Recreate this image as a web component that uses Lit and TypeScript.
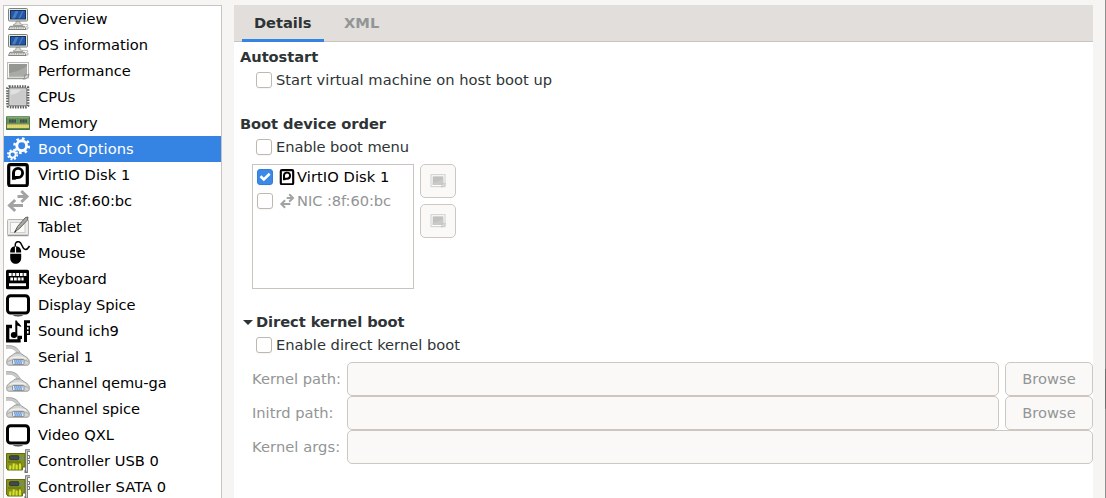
import { LitElement, html, css, svg } from "lit";
import { customElement, property } from "lit/decorators.js";

const monitor = svg`
  <rect x="2.500" y="1.500" width="19" height="12.500" rx="1" fill="#e9e9e3" stroke="#7d7f79"/>
  <rect x="4.500" y="3.500" width="15" height="8.500" fill="#2458a6" stroke="#123263"/>
  <path d="M6 11.500 9.500 4h3l-3.500 7.500zM12.500 11.500 16 4h1.500L14 11.500z" fill="#6d9ad6" opacity=".55"/>
  <path d="M10 14.500h4v2l2.500 1v1h-9v-1l2.500-1z" fill="#d9d9d4" stroke="#8b8b85" stroke-width=".7"/>
  <path d="M4 19.300h14.500l1.500 3.200H2.500z" fill="#f1f1ee" stroke="#74766f" stroke-width=".9"/>
  <path d="M4.500 20.900h13.500" stroke="#777" stroke-dasharray="1.200 .6" stroke-width="1"/>
  <path d="M16 17.500c3-.3 6-.2 6 .6s-2 .7-2 1.900M20.500 20h1.500v2h-2" fill="none" stroke="#a5a7a1" stroke-width=".8"/>`;
const image = svg`
  <rect x="1.500" y="3.500" width="21" height="15.500" fill="#f8f8f8" stroke="#b9bbb7"/>
  <path d="M1 19.700h19" stroke="#8b8d89"/>
  <rect x="3" y="5" width="18" height="12.500" fill="#959793"/>
  <path d="M3 14c7-1 12-3 18-7v10.500H3z" fill="#a9aba7"/>
  <path d="M17.500 20c1.500-1 1.500-2.500 1.300-4 1.500.5 2.700 0 4.200-1 0 2.500-2.500 5-5.500 5z" fill="#e6e7e5" stroke="#777974" stroke-width=".8"/>`;
const thumb = svg`
  <rect x="1.500" y="2.500" width="21" height="18" fill="#fff" stroke="#a5a7a3" stroke-width="1.500"/>
  <rect x="4" y="5" width="16" height="13" fill="#8a8c88"/>
  <path d="M4 15c6-1 10-3 16-6v9H4z" fill="#9b9d99"/>
  <path d="M16.500 21c1.500-1 1.500-3 1.200-4.500 1.800.5 3.500 0 5.300-1 0 3-3 5.500-6.500 5.500z" fill="#ddd" stroke="#777974" stroke-width="1.100"/>`;
const cpu = svg`
  <rect x="1.700" y="1.700" width="20.200" height="20.200" rx="1.500" fill="none" stroke="#5c5f5a" stroke-width="3" stroke-dasharray="1.500 1.060"/>
  <rect x="2.800" y="2.800" width="18" height="18" rx="1.500" fill="#cfcfcf" stroke="#777974"/>
  <rect x="4.500" y="4.500" width="14.600" height="14.600" fill="#e0e0e0"/>
  <path d="M4.500 19.100V10C9 9 13 8 15 4.500h4.100v14.600z" fill="#cbcbcb"/>`;
const memory = svg`
  <path d="M.5 5.700h23v12.800H.5z" fill="#5f9457" stroke="#55784e"/>
  <path d="M1 6.300h22" stroke="#8bb583"/>
  <path d="M2.500 8h8v4.200h-8zM13.500 8h8v4.200h-8z" fill="#444f42" stroke="#7fa877" stroke-width=".6"/>
  <path d="M5 8v4.200M8 8v4.200M16 8v4.200M19 8v4.200" stroke="#71806d" stroke-width=".6"/>
  <path d="M1 15.300h22" stroke="#c5c35a" stroke-width="3.400"/>
  <path d="M1.500 15.300h21" stroke="#f0e27a" stroke-width="3.400" stroke-dasharray="1.200 .8"/>
  <path d="M.5 18.300h23" stroke="#496844"/>`;
const gears = svg`
  <circle cx="15.700" cy="8.700" r="4.900" fill="none" stroke="#fff" stroke-width="2.900"/>
  <circle cx="15.700" cy="8.700" r="7.200" fill="none" stroke="#fff" stroke-width="2.500" stroke-dasharray="2.600 3.055"/>
  <circle cx="6.600" cy="17.600" r="3.100" fill="none" stroke="#fff" stroke-width="1.900"/>
  <circle cx="6.600" cy="17.600" r="4.700" fill="none" stroke="#fff" stroke-width="1.800" stroke-dasharray="1.900 1.791"/>`;
const disk = svg`
  <rect x="2.700" y="1.700" width="18.600" height="21.100" rx="1.800" fill="#fff" stroke="#000" stroke-width="3.200"/>
  <path d="M6 16.800V10a6 6 0 1 1 6 6c-2 0-2.500.8-4 .8z" fill="#000"/>
  <path d="M9 13V9.800a3.100 3.100 0 1 1 3.100 3.200z" fill="#fff"/>`;
const nic = svg`
  <path d="M11.500 7.500h9.500M15.300 2l5.700 5.500-5.700 5.500M17 16.500H3.500M9.200 11l-5.700 5.500L9.200 22" fill="none" stroke="#a3a3a3" stroke-width="3"/>`;
const tablet = svg`
  <rect x="1.500" y="4.500" width="21" height="15.500" rx="1" fill="#ececea" stroke="#b5b5b1"/>
  <rect x="4.500" y="7.500" width="14.500" height="10" fill="#fafaf8" stroke="#cfcfcb"/>
  <path d="M1.500 20.700h21" stroke="#858782"/>
  <path d="M9 16.500 11.500 11.500 19.500 2.500l2.500-.5-.5 3L13.500 13.500z" fill="#a8aaa5" stroke="#555753" stroke-width=".9"/>
  <path d="m8 18 1-2.500 1.500 1.200z" fill="#222"/>`;
const mouse = svg`
  <path d="M4.200 11.500c0-4 1.800-5.800 4.700-6.200v6.200zM10.100 5.300c3.300.4 5.100 2.200 5.100 6.200h-5.100zM4.200 12.800h11v4c0 8-11 8-11 0z" fill="#000"/>
  <path d="M9.500 5.700C8.500 1.500 11 .3 13 .8c3.500.8 2.500 7.400 6.500 7.700 2 .1 2.700-1.500 4-3.500" fill="none" stroke="#000" stroke-width="1.500"/>`;
const keyboard = svg`
  <rect y="2.700" width="23" height="19.500" rx="1.500" fill="#000"/>
  <path d="M2.800 7.500h17.600" stroke="#fff" stroke-width="3" stroke-dasharray="2.800 .9"/>
  <path d="M4.300 12h13.300" stroke="#fff" stroke-width="3" stroke-dasharray="2.800 .9"/>
  <path d="M3 17.700h17" stroke="#fff" stroke-width="2.800"/>`;
const display = svg`
  <rect x="1.500" y="2.700" width="21" height="17.300" rx="3" fill="#fff" stroke="#000" stroke-width="3"/>
  <path d="M6.500 22.200h11c-3 1.600-8 1.600-11 0z" fill="#222"/>`;
const sound = svg`
  <path d="M6 7.500H1.700v14.300H13v-3.500h3" fill="none" stroke="#000" stroke-width="3.300"/>
  <path d="M9.300 17V1.500h1.500c.8 2.600 3.700 3.500 4.700 6.500l-4.200-1.500V17z" fill="#000"/>
  <ellipse cx="8" cy="16" rx="3.200" ry="3" fill="#000"/>
  <path d="M24 2.800h-4.500V23" fill="none" stroke="#000" stroke-width="3"/>
  <path d="M20 7.500h3.300v3.800H20M20 11.300h3.300v3.900H20" fill="none" stroke="#000" stroke-width="1.500"/>`;
const serial = svg`
  <path d="M0 2c6-1 10.500 1 12.500 6" fill="none" stroke="#c9cbc8" stroke-width="2.800"/>
  <path d="M0 .7c7-.6 12 1.800 14 7" fill="none" stroke="#9b9d9a" stroke-width=".8"/>
  <path d="M0 3.400c5-.8 9 .6 11 4.600" fill="none" stroke="#a9aba8" stroke-width=".7"/>
  <path d="M9 8h5.500c3 3 8 4 8.700 8v2.500c0 1-1 1.700-2 1.700H2.800c-1 0-2-.7-2-1.700V16C1.500 12 6 11 9 8z" fill="#d3d5d2" stroke="#8f918e" stroke-width=".9"/>
  <path d="M4 13.500c4-2 12-2 16 0" fill="none" stroke="#f2f2f2" stroke-width="1.300"/>
  <path d="M1.500 17c2-3 19-3 21 0" fill="none" stroke="#a3a5a2" stroke-width=".8"/>
  <rect x="6.500" y="14.500" width="11.500" height="5" rx="1" fill="#e2eaf4" stroke="#858784" stroke-width=".9"/>
  <path d="M8 16h8.500M8.500 18h7.500" stroke="#5b93dd" stroke-width="1.700" stroke-dasharray="1.700 .3"/>`;
const card = svg`
  <path d="M.5 4.500h18.500v13.500h-2.500v3H1.500v-1.500h-1z" fill="#87931a" stroke="#626b16"/>
  <rect x="3.500" y="6.700" width="9.500" height="4" rx="1" fill="#414952" stroke="#272c30" stroke-width=".8"/>
  <path d="M13 7.500h4M13 9.700h4" stroke="#5f8f96" stroke-width="1.200"/>
  <path d="M2 13h13M11 15h5" stroke="#5f6a14" stroke-width="1"/>
  <path d="M4 20.500l.5-4M7.300 20.500l.5-6M10.600 20.500v-5M14 20.500v-6" stroke="#d4e32a" stroke-width="2.100"/>
  <path d="M24 1.700h-3.500V22.500h-2" fill="none" stroke="#6f726d" stroke-width="2.800"/>
  <path d="M24 1.700h-3.500V22.500" fill="none" stroke="#d0d2cd" stroke-width="1.100"/>
  <path d="M21.500 6.500h2v3h-2M21.500 11.500h2v3h-2" fill="none" stroke="#777974"/>`;

const icons: Record<string, unknown> = {
  monitor, image, thumb, cpu, memory, gears, disk, nic, tablet, mouse, keyboard, display, sound, serial, card,
};

@customElement("vm-icon")
class VmIcon extends LitElement {
  @property() name = "monitor";
  static styles = css`
    :host { display: block; width: 24px; height: 24px; flex: none; }
    .glyph { display: block; width: 100%; height: 100%; }
  `;
  render() {
    return html`<svg class="glyph" viewBox="0 0 24 24">${icons[this.name]}</svg>`;
  }
}

@customElement("check-row")
class CheckRow extends LitElement {
  @property() label = "";
  @property() icon = "";
  @property({ type: Boolean }) checked = false;
  static styles = css`
    :host { display: flex; align-items: center; height: 24px; white-space: nowrap; }
    .box { box-sizing: border-box; width: 16px; height: 16px; flex: none; border: 1px solid #bfb8b1; border-radius: 3px; background: #fff; margin-right: 4px; box-shadow: 0 1px 1px #0000000a; }
    .box.on { border-color: #2f7fdc; background: #3d8ae6; }
    .tick { display: block; width: 14px; height: 14px; }
    .small { width: 16px; height: 16px; margin: 0 2px 0 2px; }
  `;
  render() {
    return html`
      <span class="box ${this.checked ? "on" : ""}">
        ${this.checked
          ? html`<svg class="tick" viewBox="0 0 14 14"><path d="M2.500 6.300 5.800 9.500 11.700 3.800" fill="none" stroke="#fff" stroke-width="2.600"/></svg>`
          : ""}
      </span>
      ${this.icon ? html`<vm-icon class="small" name=${this.icon}></vm-icon>` : ""}
      <span>${this.label}</span>`;
  }
}

// Icon, label and an optional tracking class for each hardware entry.
const devices: [string, string, string?][] = [
  ["monitor", "Overview", "loose"], ["monitor", "OS information"], ["image", "Performance"], ["cpu", "CPUs"],
  ["memory", "Memory"], ["gears", "Boot Options", "loose"], ["disk", "VirtIO Disk 1", "loose"], ["nic", "NIC :8f:60:bc", "tight"],
  ["tablet", "Tablet"], ["mouse", "Mouse"], ["keyboard", "Keyboard"], ["display", "Display Spice", "tight"],
  ["sound", "Sound ich9", "tight"], ["serial", "Serial 1", "tight"], ["serial", "Channel qemu-ga", "tighter"], ["serial", "Channel spice", "tight"],
  ["display", "Video QXL", "loose"], ["card", "Controller USB 0"], ["card", "Controller SATA 0", "loose"],
];

@customElement("app-root")
class AppRoot extends LitElement {
  static styles = css`
    :host { display: flex; box-sizing: border-box; width: 1106px; height: 498px; padding: 5px 13px 0 3px; gap: 12px; overflow: hidden; background: linear-gradient(#8f9090 369px, #6e6f6f 369px 409px, #8f9090 409px) right / 1px 100% no-repeat #f6f5f4; color: #2e3436; font: 14.667px/18px "DejaVu Sans", sans-serif; white-space: nowrap; }
    .devices { box-sizing: border-box; width: 219px; height: 510px; flex: none; border: 1px solid #c9c4bf; background: #fff; color: #000; }
    .device { display: flex; align-items: center; height: 26px; padding-left: 2px; gap: 8px; }
    .device.selected { background: #3584e4; color: #fff; }
    .loose { letter-spacing: .07px; }
    .tight { letter-spacing: -.07px; }
    .tighter { letter-spacing: -.12px; }
    .main { flex: 1; min-width: 0; background: #fff; }
    .tabs { display: flex; box-sizing: border-box; height: 37px; gap: 8px; padding-left: 8px; background: #e1dedb; border-bottom: 1px solid #c9c4bf; font-weight: bold; }
    .tab { box-sizing: border-box; height: 37px; padding: 9px 12px 0; color: #929595; }
    .tab.active { width: 82px; color: #2e3436; border-bottom: 3px solid #3584e4; }
    .content { padding: 6px 0 0 6px; }
    .heading { display: flex; align-items: center; height: 18px; font-weight: bold; letter-spacing: -.07px; }
    .arrow { width: 10px; height: 5px; margin: 0 3px; }
    .option { padding-left: 16px; height: 24px; margin-top: 2px; }
    .autostart { letter-spacing: .027px; }
    .section { margin-top: 23px; }
    .order { display: flex; gap: 6px; padding-left: 12px; margin-top: 5px; }
    .bootlist { box-sizing: border-box; width: 162px; height: 125px; padding-left: 4px; border: 1px solid #c9c4bf; color: #000; }
    .dim { color: #929595; }
    .moves { display: flex; flex-direction: column; gap: 6px; }
    .button { display: flex; align-items: center; justify-content: center; box-sizing: border-box; width: 36px; height: 34px; border: 1px solid #cdc7c2; border-radius: 5px; background: #faf9f8; color: #929595; }
    .mini { width: 16px; height: 16px; opacity: .5; }
    .kernel { margin-top: 24px; }
    .fields { display: grid; grid-template-columns: 89px 1fr 88px; column-gap: 6px; padding-left: 12px; margin-top: 5px; align-items: center; color: #929595; }
    .entry { box-sizing: border-box; height: 34px; border: 1px solid #cdc7c2; border-radius: 5px; background: #faf9f8; }
    .wide { grid-column: 2 / 4; }
    .browse { width: 88px; }
  `;
  render() {
    return html`
      <div class="devices">
        ${devices.map(([icon, name, tracking]) => html`
          <div class="device ${name === "Boot Options" ? "selected" : ""}"><vm-icon name=${icon}></vm-icon><span class=${tracking ?? ""}>${name}</span></div>`)}
      </div>
      <div class="main">
        <div class="tabs"><div class="tab active tight">Details</div><div class="tab">XML</div></div>
        <div class="content">
          <div class="heading">Autostart</div>
          <check-row class="option autostart" label="Start virtual machine on host boot up"></check-row>
          <div class="heading section">Boot device order</div>
          <check-row class="option tight" label="Enable boot menu"></check-row>
          <div class="order">
            <div class="bootlist">
              <check-row class="loose" checked icon="disk" label="VirtIO Disk 1"></check-row>
              <check-row class="dim tight" icon="nic" label="NIC :8f:60:bc"></check-row>
            </div>
            <div class="moves">
              <div class="button"><vm-icon class="mini" name="thumb"></vm-icon></div>
              <div class="button"><vm-icon class="mini" name="thumb"></vm-icon></div>
            </div>
          </div>
          <div class="heading kernel">
            <svg class="arrow" viewBox="0 0 10 5"><path d="M0 0h10L5 5z" fill="#2e3436"/></svg>Direct kernel boot
          </div>
          <check-row class="option" label="Enable direct kernel boot"></check-row>
          <div class="fields">
            <span>Kernel path:</span><div class="entry"></div><div class="button browse">Browse</div>
            <span>Initrd path:</span><div class="entry"></div><div class="button browse">Browse</div>
            <span class="loose">Kernel args:</span><div class="entry wide"></div>
          </div>
        </div>
      </div>`;
  }
}
